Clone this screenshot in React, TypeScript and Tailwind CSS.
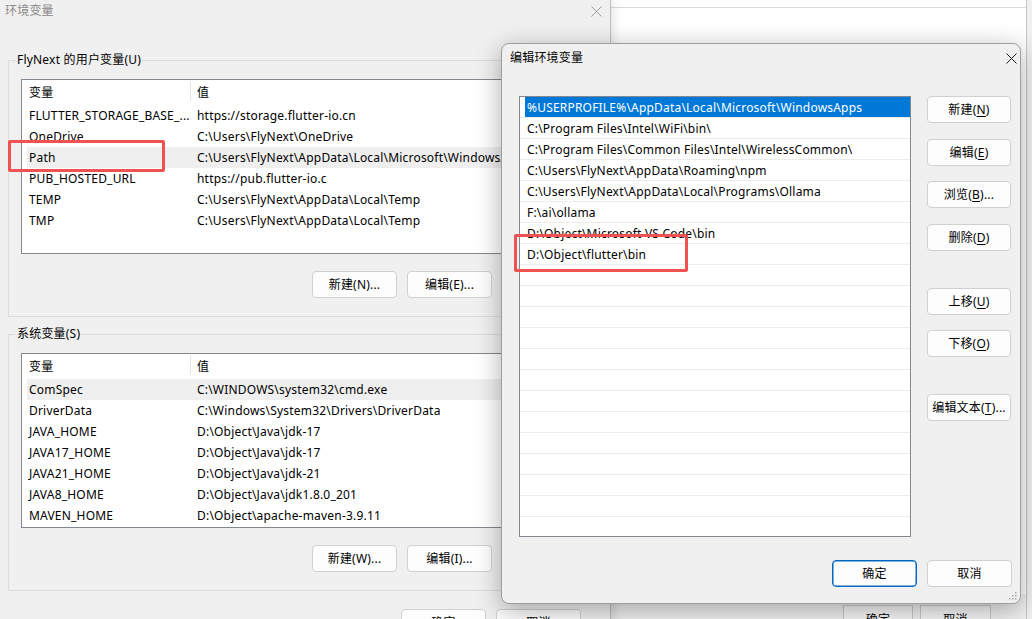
import type { ReactNode } from "react";

const USER_VARS: [string, string][] = [
  ["FLUTTER_STORAGE_BASE_...", "https://storage.flutter-io.cn"],
  ["OneDrive", "C:\\Users\\FlyNext\\OneDrive"],
  ["Path", "C:\\Users\\FlyNext\\AppData\\Local\\Microsoft\\WindowsApps;"],
  ["PUB_HOSTED_URL", "https://pub.flutter-io.c"],
  ["TEMP", "C:\\Users\\FlyNext\\AppData\\Local\\Temp"],
  ["TMP", "C:\\Users\\FlyNext\\AppData\\Local\\Temp"],
];

const SYS_VARS: [string, string][] = [
  ["ComSpec", "C:\\WINDOWS\\system32\\cmd.exe"],
  ["DriverData", "C:\\Windows\\System32\\Drivers\\DriverData"],
  ["JAVA_HOME", "D:\\Object\\Java\\jdk-17"],
  ["JAVA17_HOME", "D:\\Object\\Java\\jdk-17"],
  ["JAVA21_HOME", "D:\\Object\\Java\\jdk-21"],
  ["JAVA8_HOME", "D:\\Object\\Java\\jdk1.8.0_201"],
  ["MAVEN_HOME", "D:\\Object\\apache-maven-3.9.11"],
];

const PATHS = [
  "%USERPROFILE%\\AppData\\Local\\Microsoft\\WindowsApps",
  "C:\\Program Files\\Intel\\WiFi\\bin\\",
  "C:\\Program Files\\Common Files\\Intel\\WirelessCommon\\",
  "C:\\Users\\FlyNext\\AppData\\Roaming\\npm",
  "C:\\Users\\FlyNext\\AppData\\Local\\Programs\\Ollama",
  "F:\\ai\\ollama",
  "D:\\Object\\Microsoft VS Code\\bin",
  "D:\\Object\\flutter\\bin",
  ...Array(13).fill(""),
];

function CloseX({ color }: { color: string }) {
  return (
    <svg width="11" height="11" viewBox="0 0 11 11">
      <path d="M0.5 0.5L10.5 10.5M10.5 0.5L0.5 10.5" stroke={color} strokeWidth="1" />
    </svg>
  );
}

function Btn({ children, primary = false, w = "w-[85px]" }: { children: ReactNode; primary?: boolean; w?: string }) {
  return (
    <div
      className={`${w} h-[27px] shrink-0 flex items-center justify-center rounded-[4px] border bg-[#fdfdfd] ${
        primary ? "border-[#0067c0] shadow-[inset_0_0_0_0.5px_#0067c0]" : "border-[#d0d0d0]"
      }`}
    >
      {children}
    </div>
  );
}

function U({ children }: { children: ReactNode }) {
  return <span className="underline underline-offset-2">{children}</span>;
}

function VarList({ rows, selected }: { rows: [string, string][]; selected: number }) {
  return (
    <div className="mx-[12px] h-[175px] pt-px border border-[#828790] bg-white overflow-hidden">
      <div className="flex h-[24px]">
        <div className="w-[168px] pl-[7px] flex items-center">变量</div>
        <div className="w-px h-[20px] bg-[#e5e5e5]" />
        <div className="pl-[6px] flex items-center">值</div>
      </div>
      {rows.map(([k, v], i) => (
        <div
          key={k}
          className={`ml-[5px] h-[21px] flex items-center whitespace-nowrap ${i === selected ? "bg-[#efefef]" : ""}`}
        >
          <div className="w-[170px] shrink-0 pl-[2px] overflow-hidden">{k}</div>
          <div className="w-[304px] shrink-0 overflow-hidden">{v}</div>
        </div>
      ))}
    </div>
  );
}

function Group({ title, rows, selected, btns }: { title: string; rows: [string, string][]; selected: number; btns: string[] }) {
  return (
    <fieldset className="mx-[8px] min-w-0 h-[265px] border border-[#dcdcdc]">
      <legend className="ml-[7px] px-px leading-[16px]">{title}</legend>
      <div className="mt-[11px]">
        <VarList rows={rows} selected={selected} />
      </div>
      <div className="mt-[17px] flex justify-end gap-[10px] pr-[14px]">
        {btns.map((b) => (
          <Btn key={b}>{b}</Btn>
        ))}
      </div>
    </fieldset>
  );
}

export default function App() {
  return (
    <div className="relative w-[1032px] h-[619px] overflow-hidden bg-[#f0f0f0] text-[12px] tracking-[0.2px] text-black font-['Noto_Sans','Noto_Sans_CJK_SC',sans-serif]">
      {/* back window (系统属性) */}
      <div className="absolute left-[611px] top-0 w-[416px] h-[619px] bg-[#f0f0f0] border-r border-[#c4c4c4] flex flex-col">
        <div className="h-[8px] shrink-0 bg-white border-b border-[#dadada]" />
        <div className="h-[586px] shrink-0 bg-white" />
        <div className="mt-[11px] shrink-0 pl-[232px] flex gap-[7px]">
          <div className="w-[70px] h-[24px] border border-[#c8c8c8] bg-[#f6f6f6] flex items-start justify-center pt-[5px]">确定</div>
          <div className="w-[71px] h-[24px] border border-[#c8c8c8] bg-[#f6f6f6] flex items-start justify-center pt-[5px]">取消</div>
        </div>
      </div>

      {/* 环境变量 */}
      <div className="absolute left-0 top-0 w-[611px] h-[640px] bg-[#f0f0f0] border-r border-[#bdbdbd] shadow-[2px_0_10px_rgba(0,0,0,0.12)] flex flex-col">
        <div className="h-[22px] flex items-center justify-between pl-[5px] pr-[8px]">
          <span className="text-[#8a8a8a]">环境变量</span>
          <CloseX color="#9a9a9a" />
        </div>
        <div className="mt-[30px]">
          <Group title="FlyNext 的用户变量(U)" rows={USER_VARS} selected={2} btns={["新建(N)...", "编辑(E)...", "删除(D)"]} />
        </div>
        <div className="mt-[9px]">
          <Group title="系统变量(S)" rows={SYS_VARS} selected={0} btns={["新建(W)...", "编辑(I)...", "删除(L)"]} />
        </div>
        <div className="mt-[18px] flex justify-end gap-[10px] pr-[29px]">
          <Btn>确定</Btn>
          <Btn>取消</Btn>
        </div>
      </div>

      {/* 编辑环境变量 */}
      <div className="absolute left-[501px] top-[43px] w-[520px] h-[561px] rounded-[8px] border border-[#9e9e9e] bg-[#f0f0f0] shadow-[0_6px_26px_rgba(0,0,0,0.32)] flex flex-col">
        <div className="h-[28px] flex items-center justify-between pl-[8px] pr-[3px]">
          <span>编辑环境变量</span>
          <CloseX color="#1a1a1a" />
        </div>
        <div className="mt-[24px] pl-[17px] flex">
          <div className="w-[392px] h-[441px] border border-[#828790] bg-white overflow-hidden">
            {PATHS.map((p, i) => (
              <div key={i} className="h-[21px] border-b border-[#ececec]">
                <div
                  className={`ml-[5px] h-[20px] pl-[2px] pt-[2px] flex items-center whitespace-nowrap ${
                    i === 0 ? "bg-[#0078d7] text-white" : ""
                  }`}
                >
                  {p}
                </div>
              </div>
            ))}
          </div>
          <div className="ml-[16px] flex flex-col">
            <Btn w="w-[84px]">新建(<U>N</U>)</Btn>
            <div className="mt-[16px]"><Btn w="w-[84px]">编辑(<U>E</U>)</Btn></div>
            <div className="mt-[15px]"><Btn w="w-[84px]">浏览(<U>B</U>)...</Btn></div>
            <div className="mt-[16px]"><Btn w="w-[84px]">删除(<U>D</U>)</Btn></div>
            <div className="mt-[37px]"><Btn w="w-[84px]">上移(<U>U</U>)</Btn></div>
            <div className="mt-[15px]"><Btn w="w-[84px]">下移(<U>O</U>)</Btn></div>
            <div className="mt-[37px]"><Btn w="w-[84px]">编辑文本(<U>T</U>)...</Btn></div>
          </div>
        </div>
        <div className="mt-[23px] pr-[8px] flex justify-end gap-[10px]">
          <Btn primary>确定</Btn>
          <Btn>取消</Btn>
        </div>
        <svg className="absolute right-[3px] bottom-[3px]" width="8" height="8" viewBox="0 0 8 8" fill="#a8a8a8">
          <rect x="6" y="0" width="1.5" height="1.5" />
          <rect x="3" y="3" width="1.5" height="1.5" />
          <rect x="6" y="3" width="1.5" height="1.5" />
          <rect x="0" y="6" width="1.5" height="1.5" />
          <rect x="3" y="6" width="1.5" height="1.5" />
          <rect x="6" y="6" width="1.5" height="1.5" />
        </svg>
      </div>

      {/* red annotation boxes */}
      <div className="absolute left-[8px] top-[140px] w-[157px] h-[32px] border-[3px] border-[#f05252] rounded-[2px]" />
      <div className="absolute left-[514px] top-[234px] w-[174px] h-[38px] border-[3px] border-[#f05252] rounded-[2px]" />
    </div>
  );
}
